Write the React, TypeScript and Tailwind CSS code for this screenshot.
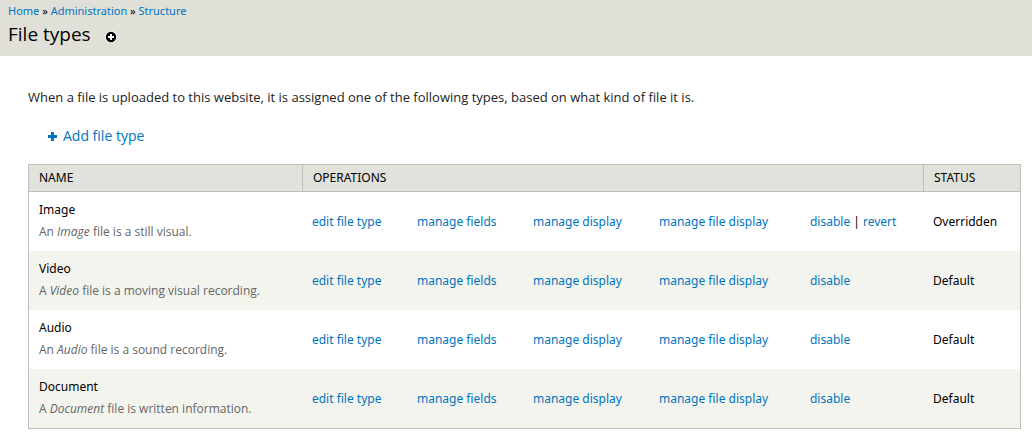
import type { ReactNode } from 'react';

type FileType = {
  name: string;
  article: string;
  description: string;
  overridden?: boolean;
};

const fileTypes: FileType[] = [
  { name: 'Image', article: 'An', description: 'file is a still visual.', overridden: true },
  { name: 'Video', article: 'A', description: 'file is a moving visual recording.' },
  { name: 'Audio', article: 'An', description: 'file is a sound recording.' },
  { name: 'Document', article: 'A', description: 'file is written information.' },
];

const operations = ['edit file type', 'manage fields', 'manage display', 'manage file display'];

function Link({ children }: { children: ReactNode }) {
  return (
    <a href="#" className="text-[#0074bd] hover:underline">
      {children}
    </a>
  );
}

function Header() {
  return (
    <header className="bg-[#e0e0d8] px-2 pt-[3px] pb-2">
      <nav aria-label="Breadcrumb" className="font-['Noto_Sans',sans-serif] text-[11px] leading-4">
        <Link>Home</Link> » <Link>Administration</Link> » <Link>Structure</Link>
      </nav>
      <div className="flex items-center gap-3.5 pt-px">
        <h1 className="text-[19px] leading-7">File types</h1>
        <button type="button" aria-label="Add to shortcuts" className="mt-1.5">
          <svg viewBox="0 0 12 12" className="size-3">
            <circle cx="6" cy="6" r="6" fill="#fff" />
            <circle cx="6" cy="6" r="5.2" fill="#000" />
            <path d="M5 3h2v2h2v2H7v2H5V7H3V5h2z" fill="#fff" />
          </svg>
        </button>
      </div>
    </header>
  );
}

function FileTypeTable() {
  return (
    <table className="w-full table-fixed border-separate border-spacing-0 border border-[#bebfb9] text-left font-['Noto_Sans',sans-serif] text-xs">
      <colgroup>
        <col />
        <col className="w-[105px]" />
        <col className="w-[116px]" />
        <col className="w-[126px]" />
        <col className="w-[151px]" />
        <col className="w-[123px]" />
        <col className="w-[97px]" />
      </colgroup>
      <thead>
        <tr className="bg-[#e1e2dc] uppercase">
          <th className="border-b border-[#bebfb9] px-2.5 py-1 font-normal leading-[18px]">Name</th>
          <th colSpan={5} className="border-b border-l border-[#bebfb9] px-2.5 py-1 font-normal leading-[18px]">
            Operations
          </th>
          <th className="border-b border-l border-[#bebfb9] px-2.5 py-1 font-normal leading-[18px]">Status</th>
        </tr>
      </thead>
      <tbody>
        {fileTypes.map((type) => (
          <tr key={type.name} className="even:bg-[#f3f4ee]">
            <td className="px-2.5 pt-2 pb-2.5">
              <div className="leading-5">{type.name}</div>
              <div className="pt-0.5 font-['Open_Sans',sans-serif] leading-[19px] text-[#666]">
                {type.article} <em>{type.name}</em> {type.description}
              </div>
            </td>
            {operations.map((label) => (
              <td key={label} className="px-2.5 whitespace-nowrap">
                <Link>{label}</Link>
              </td>
            ))}
            <td className="px-2.5 whitespace-nowrap">
              <Link>disable</Link>
              {type.overridden && (
                <>
                  {' | '}
                  <Link>revert</Link>
                </>
              )}
            </td>
            <td className="px-2.5">{type.overridden ? 'Overridden' : 'Default'}</td>
          </tr>
        ))}
      </tbody>
    </table>
  );
}

export default function App() {
  return (
    <div className="bg-white font-['Open_Sans',sans-serif] text-black">
      <Header />
      <main className="pt-[31px] pr-[11px] pb-3 pl-7">
        <p className="text-[13px] leading-5 text-[#222]">
          When a file is uploaded to this website, it is assigned one of the following types, based on what kind of
          file it is.
        </p>
        <div className="flex pt-[19px] pb-[18px] pl-5 text-[14px] leading-5">
          <a href="#" className="inline-flex items-center gap-1.5 text-[#0074bd] hover:underline">
            <svg viewBox="0 0 9 9" className="size-[9px]" aria-hidden="true">
              <path d="M3 0h3v3h3v3H6v3H3V6H0V3h3z" fill="currentColor" />
            </svg>
            Add file type
          </a>
        </div>
        <FileTypeTable />
      </main>
    </div>
  );
}
